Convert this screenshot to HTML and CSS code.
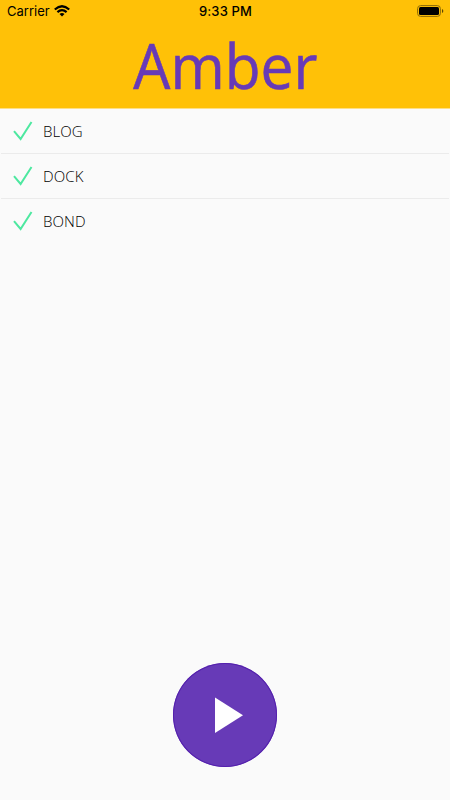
FILE: index.html
```html
<!DOCTYPE html>
<html lang="en">
<head>
<meta charset="utf-8">
<title>Amber</title>
<link rel="stylesheet" href="styles.css">
</head>
<body>
<header class="header">
  <div class="status">
    <div class="carrier"><span>Carrier</span>
      <svg class="wifi" width="16" height="12" viewBox="0 0 16 12"><g fill="none" stroke="#000" stroke-width="2.2"><path d="M.8 4.5Q8-2 15.2 4.5"/><path d="M3.4 7.1Q8 3 12.6 7.1"/></g><path d="M5.5 9Q8 7 10.5 9L8 11.6Z"/></svg>
    </div>
    <div class="time">9:33 PM</div>
    <svg class="battery" width="27" height="12" viewBox="0 0 27 12"><rect x=".6" y=".6" width="22.8" height="10.8" rx="3" fill="none" stroke="#8b6a08"/><rect x="2" y="2" width="20" height="8" rx="1.5"/><path d="M25 4Q26.3 4.5 26.3 6T25 8Z" fill="#5f4803"/></svg>
  </div>
  <h1 class="title"><span class="title-text">Amber</span></h1>
</header>
<main class="content">
  <ul class="list">
    <li class="row"><svg class="check" width="20" height="20" viewBox="0 0 20 20"><path d="M1 10.2L7.6 18 18.5 1"/></svg><span class="label">BLOG</span></li>
    <li class="row"><svg class="check" width="20" height="20" viewBox="0 0 20 20"><path d="M1 10.2L7.6 18 18.5 1"/></svg><span class="label">DOCK</span></li>
    <li class="row"><svg class="check" width="20" height="20" viewBox="0 0 20 20"><path d="M1 10.2L7.6 18 18.5 1"/></svg><span class="label">BOND</span></li>
  </ul>
  <button class="play" aria-label="Play"><svg width="104" height="104" viewBox="0 0 104 104"><path d="M42 34.5V70L70 52.2Z" fill="#fff"/></svg></button>
</main>
</body>
</html>
```

FILE: styles.css
```css
* { box-sizing: border-box; }
body {
  margin: 0;
  height: 800px;
  display: flex;
  flex-direction: column;
  background: #fafafa;
  color: #000;
  font-family: "Open Sans", "Noto Sans", sans-serif;
}
.header { height: 108px; background: #ffc107; box-shadow: 0 1px 0 #fddf86; }
.status {
  height: 22px;
  padding: 0 6px 0 7px;
  display: grid;
  grid-template-columns: 1fr auto 1fr;
  align-items: center;
  font-family: Inter, sans-serif;
  font-size: 13px;
  line-height: 22px;
}
.carrier { display: flex; align-items: center; gap: 4px; letter-spacing: 0; }
.time { font-weight: 500; letter-spacing: 0.15px; }
.battery { justify-self: end; }
.title {
  margin: 0;
  height: 86px;
  display: flex;
  justify-content: center;
  font-size: 62px;
  font-weight: 400;
  line-height: 86px;
  color: #673ab7;
}
.title-text { transform: scaleX(0.945); -webkit-text-stroke: 0.6px #673ab7; }
.content {
  flex: 1;
  display: flex;
  flex-direction: column;
  justify-content: space-between;
  align-items: center;
  padding-bottom: 33px;
}
.list { list-style: none; margin: 0; padding: 0 1px; width: 100%; }
.row {
  height: 45px;
  display: flex;
  align-items: center;
  gap: 10px;
  padding-left: 12px;
  border-bottom: 1px solid #ebebeb;
}
.row:first-child { height: 46px; }
.row:last-child { height: 44px; border-bottom: 0; }
.check path { fill: none; stroke: #4de8a0; stroke-width: 2; }
.label { font-size: 15px; font-weight: 300; line-height: 20px; letter-spacing: 0.1px; }
.play {
  width: 104px;
  height: 104px;
  padding: 0;
  border: 0;
  border-radius: 50%;
  background: #673ab7;
  box-shadow: inset 0 0 0 1px #5420ad;
}
.play svg { display: block; }
```
